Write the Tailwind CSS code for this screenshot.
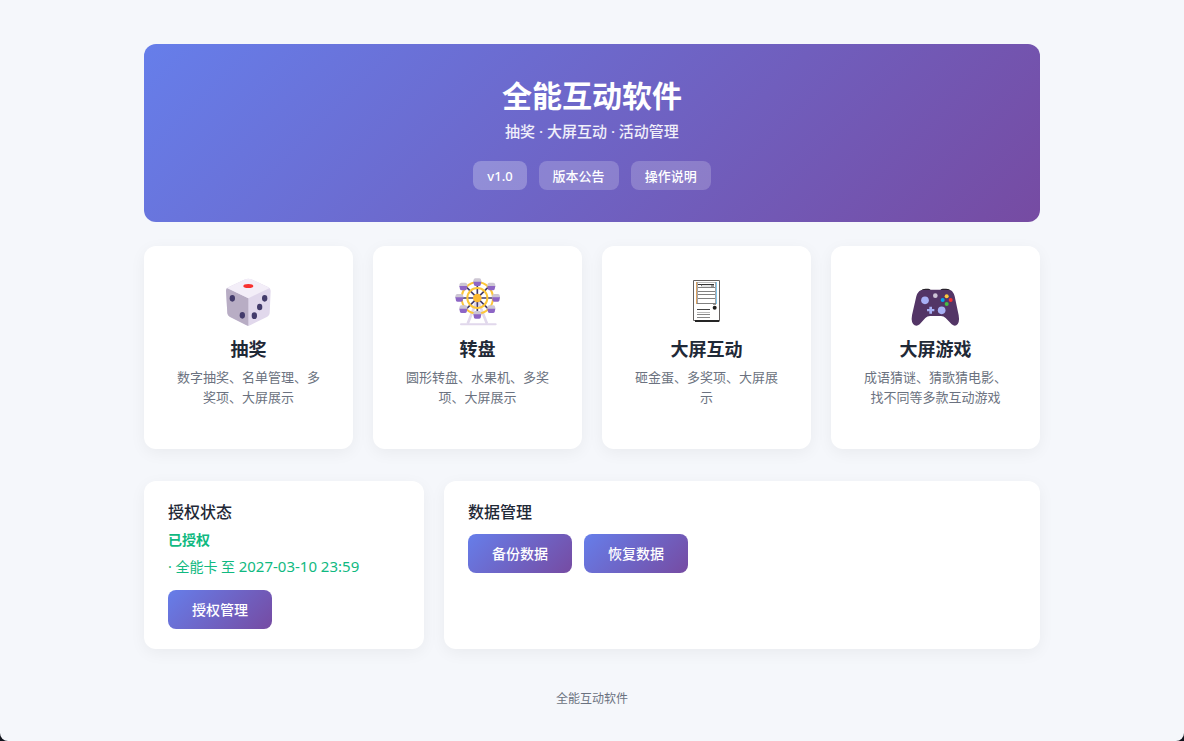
<!DOCTYPE html>
<html lang="zh-CN">
<head>
<meta charset="utf-8">
<meta name="viewport" content="width=device-width, initial-scale=1">
<title>全能互动软件</title>
<script src="https://cdn.jsdelivr.net/npm/@tailwindcss/browser@4"></script>
</head>
<body class="bg-[#10131c] font-['Noto_Sans','Noto_Sans_CJK_SC',sans-serif] text-[#1f2937]">
<div class="min-h-screen rounded-b-lg bg-[#f5f7fb] px-8 pt-11 pb-7">
  <div class="mx-auto max-w-[896px]">
    <header class="rounded-xl bg-[linear-gradient(135deg,#667eea_0%,#764ba2_100%)] px-6 py-8 text-center text-white">
      <h1 class="text-[30px] leading-10 font-bold">全能互动软件</h1>
      <p class="mt-[5px] text-[15px] leading-5 font-medium text-white/90">抽奖 · 大屏互动 · 活动管理</p>
      <div class="mt-5 flex justify-center gap-3 text-[13px] leading-[19px] font-medium">
        <span class="rounded-lg bg-white/25 px-[14px] pt-[6px] pb-1">v1.0</span>
        <button type="button" class="rounded-lg bg-white/20 px-[14px] pt-[6px] pb-1">版本公告</button>
        <button type="button" class="rounded-lg bg-white/20 px-[14px] pt-[6px] pb-1">操作说明</button>
      </div>
    </header>

    <nav class="mt-6 grid grid-cols-4 gap-5 text-center">
      <a href="#draw" class="rounded-xl bg-white px-7 pt-[26px] pb-[42px] shadow-[0_4px_16px_rgba(0,0,0,0.05)]">
        <svg class="mx-auto h-[60px] w-[61px]" viewBox="0 0 183 180" aria-hidden="true">
          <path d="M32 45 82 22Q91 18 100 22L150 45Q158 49 158 56L155 124Q155 130 148 134L98 159Q91 163 84 159L35 134Q29 131 28 124L24 56Q24 49 32 45Z" fill="#e1d8ec"/>
          <path d="M27 48 91 79V162Q87 161 84 159L35 134Q29 131 28 124L24 56Q24 51 27 48Z" fill="#b8adc4"/>
          <path d="M27 48 82 22Q91 18 100 22L155 48 91 79Z" fill="#f3eef8"/>
          <ellipse cx="91" cy="42" rx="15" ry="6" fill="#f8312f"/>
          <g fill="#433b6b"><ellipse cx="43" cy="79" rx="8" ry="10"/><ellipse cx="73" cy="130" rx="8" ry="10"/><ellipse cx="140" cy="79" rx="8" ry="10"/><ellipse cx="125" cy="105" rx="8" ry="10"/><ellipse cx="109" cy="131" rx="8" ry="10"/></g>
        </svg>
        <h2 class="mt-1 text-lg leading-[26px] font-bold">抽奖</h2>
        <p class="mt-[5px] text-[13px] leading-5 text-[#6b7280]">数字抽奖、名单管理、多奖项、大屏展示</p>
      </a>
      <a href="#wheel" class="rounded-xl bg-white px-7 pt-[26px] pb-[42px] shadow-[0_4px_16px_rgba(0,0,0,0.05)]">
        <svg class="mx-auto h-[60px] w-[61px]" viewBox="0 0 183 180" aria-hidden="true">
          <path d="M91 82 62 155M91 82 120 155" stroke="#e1d8ec" stroke-width="8" fill="none"/>
          <path d="M42 157H146" stroke="#e1d8ec" stroke-width="6" stroke-linecap="round"/>
          <path d="M91 30V130M40 78H144M53 40 129 116M129 40 53 116" stroke="#433b6b" stroke-width="5"/>
          <circle cx="91" cy="78" r="47" fill="none" stroke="#fcc63a" stroke-width="6"/>
          <circle cx="91" cy="78" r="30" fill="none" stroke="#fcc63a" stroke-width="6"/>
          <circle cx="91" cy="78" r="13" fill="#fdb92f"/>
          <defs><g id="cabin"><path d="M-12 0V-5Q-11-12-6-12H6Q11-12 12-5V0Z" fill="#cdc6d4"/><path d="M-12-2H12L10 8Q9 11 5 11H-5Q-9 11-10 8Z" fill="#8d65c5"/></g></defs>
          <use href="#cabin" x="91" y="31"/><use href="#cabin" x="133" y="44"/><use href="#cabin" x="147" y="78"/><use href="#cabin" x="133" y="112"/><use href="#cabin" x="91" y="129"/><use href="#cabin" x="49" y="112"/><use href="#cabin" x="37" y="78"/><use href="#cabin" x="49" y="44"/>
        </svg>
        <h2 class="mt-1 text-lg leading-[26px] font-bold">转盘</h2>
        <p class="mt-[5px] text-[13px] leading-5 text-[#6b7280]">圆形转盘、水果机、多奖项、大屏展示</p>
      </a>
      <a href="#screen" class="rounded-xl bg-white px-7 pt-[26px] pb-[42px] shadow-[0_4px_16px_rgba(0,0,0,0.05)]">
        <svg class="mx-auto h-[60px] w-[61px]" viewBox="0 0 183 180" aria-hidden="true" fill="none">
          <path d="M52.500 25.500H130.500V145.500H52.500Z" stroke="#64605f" stroke-width="3"/>
          <path d="M57 147H130" stroke="#252525" stroke-width="6"/>
          <path d="M61.500 30V96" stroke="#dda25f" stroke-width="3"/>
          <path d="M64.500 30V96" stroke="#77747a" stroke-width="2"/>
          <path d="M121.500 30V96" stroke="#82c8ee" stroke-width="3"/>
          <path d="M118.500 30V96" stroke="#77747a" stroke-width="2"/>
          <path d="M63 31.500H120" stroke="#999" stroke-width="2"/>
          <path d="M66 37.500H114" stroke="#333" stroke-width="3"/>
          <path d="M75 40.500H78M105 42H114" stroke="#777" stroke-width="4"/>
          <path d="M78 42H105" stroke="#ccc" stroke-width="3"/>
          <path d="M66 46.500H117M66 58.500H117M66 67.500H117M66 79.500H117M63 94.500H120" stroke="#808080" stroke-width="3"/>
          <path d="M63 112.500H102" stroke="#444" stroke-width="3"/>
          <path d="M63 121.500H102" stroke="#bbb" stroke-width="3"/>
          <path d="M63 127.500H102M63 136.500H102" stroke="#888" stroke-width="3"/>
          <path d="M111 97.500H120" stroke="#999" stroke-width="3"/>
          <circle cx="116" cy="107" r="6" fill="#202020"/>
        </svg>
        <h2 class="mt-1 text-lg leading-[26px] font-bold">大屏互动</h2>
        <p class="mt-[5px] text-[13px] leading-5 text-[#6b7280]">砸金蛋、多奖项、大屏展示</p>
      </a>
      <a href="#games" class="rounded-xl bg-white px-7 pt-[26px] pb-[42px] shadow-[0_4px_16px_rgba(0,0,0,0.05)]">
        <svg class="mx-auto h-[60px] w-[61px]" viewBox="0 0 183 180" aria-hidden="true">
          <path d="M47 57Q51 50 62 50H70Q76 50 78 57ZM105 57Q107 50 113 50H123Q134 50 137 57Z" fill="#1c1c1c"/>
          <path d="M48 55Q52 53 60 53H124Q133 53 137 55Q145 59 149 73L161 130Q165 153 154 160Q148 164 140 157L122 138Q116 132 108 132H75Q67 132 61 138L44 157Q36 164 29 160Q17 153 21 130L34 73Q38 59 48 55Z" fill="#533566"/>
          <g fill="#a8b0f5"><circle cx="60" cy="85" r="11.500"/><circle cx="110" cy="115" r="11.500"/><path d="M73 104H81V111H88V118H81V125H73V118H66V111H73Z"/></g>
          <circle cx="91" cy="71" r="7" fill="#cdc4d6"/>
          <circle cx="125" cy="73" r="6" fill="#fcc83c"/><circle cx="113" cy="84" r="6" fill="#00a6ed"/><circle cx="137" cy="84" r="6" fill="#f8312f"/><circle cx="125" cy="96" r="6" fill="#45bd43"/>
        </svg>
        <h2 class="mt-1 text-lg leading-[26px] font-bold">大屏游戏</h2>
        <p class="mt-[5px] text-[13px] leading-5 text-[#6b7280]">成语猜谜、猜歌猜电影、找不同等多款互动游戏</p>
      </a>
    </nav>

    <main class="mt-8 grid grid-cols-[280px_1fr] gap-5">
      <section class="rounded-xl bg-white px-6 py-5 shadow-[0_4px_16px_rgba(0,0,0,0.05)]">
        <h2 class="text-base leading-[22px] font-medium">授权状态</h2>
        <p class="mt-[7px] text-sm leading-5 font-semibold text-[#10b981]">已授权</p>
        <p class="mt-[6px] text-sm leading-5 text-[#10b981]">· 全能卡 至 <time datetime="2027-03-10T23:59" class="text-[15px]">2027-03-10 23:59</time></p>
        <button type="button" class="mt-[13px] rounded-lg bg-[linear-gradient(135deg,#667eea_0%,#764ba2_100%)] px-6 py-[10px] text-sm leading-[19px] font-medium text-white">授权管理</button>
      </section>
      <section class="rounded-xl bg-white px-6 py-5 shadow-[0_4px_16px_rgba(0,0,0,0.05)]">
        <h2 class="text-base leading-[22px] font-medium">数据管理</h2>
        <div class="mt-[11px] flex gap-3">
          <button type="button" class="rounded-lg bg-[linear-gradient(135deg,#667eea_0%,#764ba2_100%)] px-6 py-[10px] text-sm leading-[19px] font-medium text-white">备份数据</button>
          <button type="button" class="rounded-lg bg-[linear-gradient(135deg,#667eea_0%,#764ba2_100%)] px-6 py-[10px] text-sm leading-[19px] font-medium text-white">恢复数据</button>
        </div>
      </section>
    </main>
    <footer class="mt-[42px] text-center text-xs leading-4 text-[#6b7280]">全能互动软件</footer>
  </div>
</div>
</body>
</html>
